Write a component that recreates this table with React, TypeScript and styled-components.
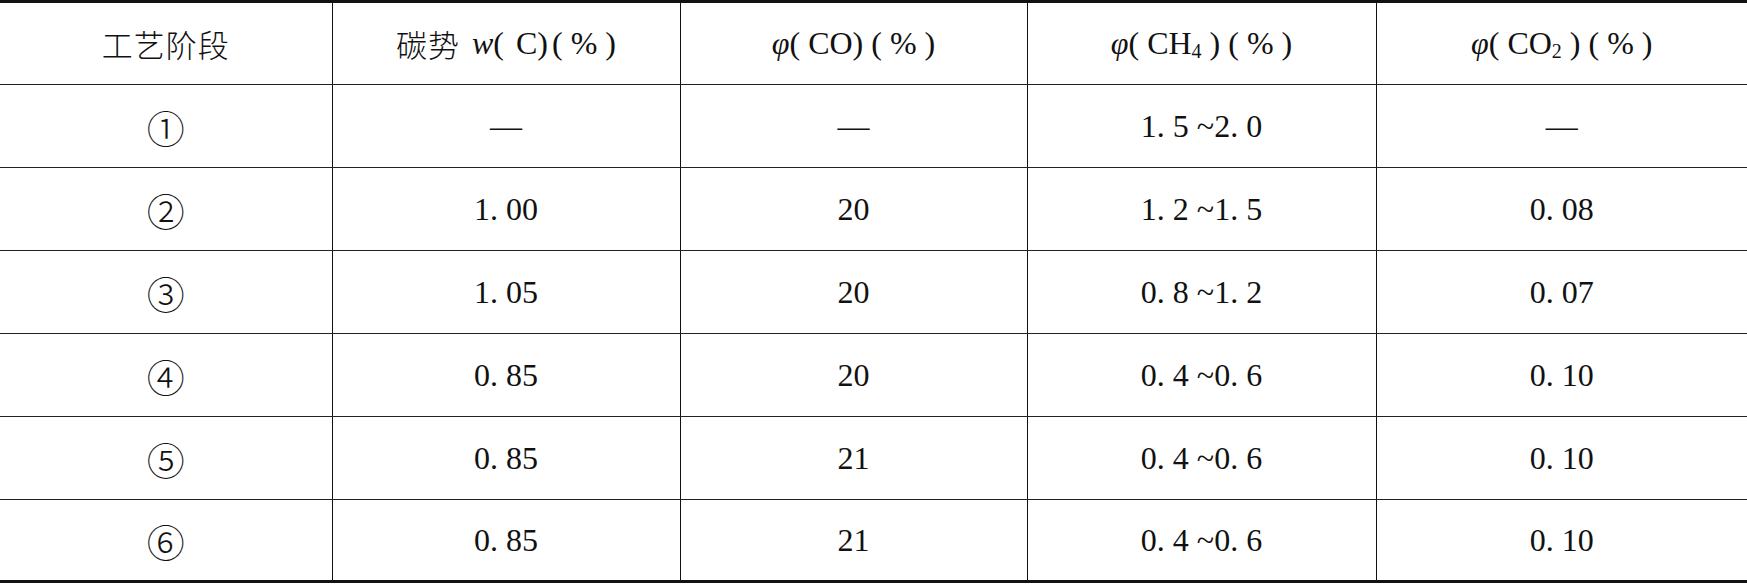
import React from "react";
import styled, { createGlobalStyle } from "styled-components";

const Global = createGlobalStyle`
  html, body { margin: 0; padding: 0; background: #fff; }
  body { font-family: "Liberation Serif", "Noto Sans CJK SC", serif; color: #111; }
`;

const Table = styled.div`
  width: 1747px;
  border-top: 3px solid #111;
  border-bottom: 3px solid #111;
  box-sizing: border-box;
`;

const Row = styled.div<{ $h: number; $last?: boolean }>`
  display: grid;
  grid-template-columns: 331.5px 348px 347px 349px 1fr;
  height: ${(p) => p.$h}px;
  box-sizing: border-box;
  border-bottom: ${(p) => (p.$last ? "none" : "1.5px solid #222")};
`;

const Cell = styled.div<{ $first?: boolean }>`
  display: flex;
  align-items: center;
  justify-content: center;
  box-sizing: border-box;
  border-left: ${(p) => (p.$first ? "none" : "1.5px solid #111")};
  font-size: 32px;
  white-space: pre;
`;

const Cjk = styled.span<{ $gap?: number }>`
  font-family: "Noto Sans CJK SC", sans-serif;
  font-weight: 300;
  font-size: 31px;
  letter-spacing: 1px;
  margin-right: ${(p) => p.$gap ?? 0}px;
`;

const Circ = styled.span`
  font-family: "Noto Sans CJK SC", serif;
  font-weight: 300;
  font-size: 38px;
`;

const Var = styled.i`
  font-family: "Liberation Serif", serif;
  font-style: italic;
`;

const Sub = styled.span`
  display: inline-block;
  font-size: 20px;
  transform: translateY(8px);
`;

const Paren = styled.span<{ $l?: number; $r?: number }>`
  margin-left: ${(p) => p.$l ?? 0}px;
  margin-right: ${(p) => p.$r ?? 0}px;
`;

type R = [string, string, string, string, string];

const rows: R[] = [
  ["①", "—", "—", "1. 5 ~2. 0", "—"],
  ["②", "1. 00", "20", "1. 2 ~1. 5", "0. 08"],
  ["③", "1. 05", "20", "0. 8 ~1. 2", "0. 07"],
  ["④", "0. 85", "20", "0. 4 ~0. 6", "0. 10"],
  ["⑤", "0. 85", "21", "0. 4 ~0. 6", "0. 10"],
  ["⑥", "0. 85", "21", "0. 4 ~0. 6", "0. 10"],
];

export default function App() {
  return (
    <>
      <Global />
      <Table>
        <Row $h={82}>
          <Cell $first>
            <Cjk>工艺阶段</Cjk>
          </Cell>
          <Cell>
            <Cjk $gap={12}>碳势</Cjk>
            <Var>w</Var>
            <Paren $r={4}>(</Paren> C<Paren $r={4}>)</Paren>( % )
          </Cell>
          <Cell>
            <Var>φ</Var>( CO) ( % )
          </Cell>
          <Cell>
            <Var>φ</Var>( CH<Sub>4</Sub> ) ( % )
          </Cell>
          <Cell>
            <Var>φ</Var>( CO<Sub>2</Sub> ) ( % )
          </Cell>
        </Row>
        {rows.map((r, i) => (
          <Row key={i} $h={i === rows.length - 1 ? 80 : 83} $last={i === rows.length - 1}>
            <Cell $first>
              <Circ>{r[0]}</Circ>
            </Cell>
            <Cell>{r[1]}</Cell>
            <Cell>{r[2]}</Cell>
            <Cell>{r[3]}</Cell>
            <Cell>{r[4]}</Cell>
          </Row>
        ))}
      </Table>
    </>
  );
}
